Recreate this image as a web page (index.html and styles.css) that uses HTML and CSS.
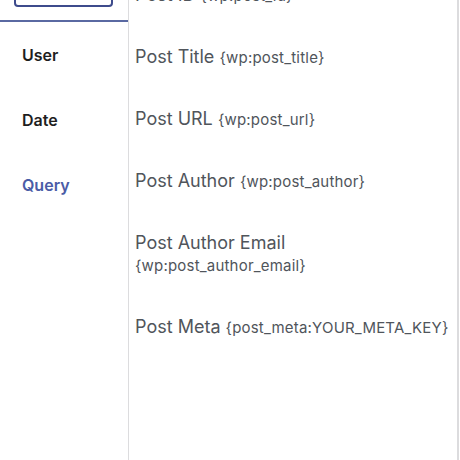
FILE: index.html
```html
<!DOCTYPE html>
<html lang="en">
  <head>
    <meta charset="UTF-8" />
    <meta name="viewport" content="width=device-width, initial-scale=1.0" />
    <title>Merge Tags</title>
    <link rel="stylesheet" href="styles.css">
  </head>
  <body>
    <div class="tags-panel">
      <div class="tags-nav">
        <div class="nav-head">
          <button class="nav-btn" type="button"></button>
        </div>
        <div class="nav-item">User</div>
        <div class="nav-item">Date</div>
        <div class="nav-item active">Query</div>
      </div>

      <ul class="tag-list">
        <li class="tag">Post ID <code>{wp:post_id}</code></li>
        <li class="tag">Post Title <code>{wp:post_title}</code></li>
        <li class="tag">Post URL <code>{wp:post_url}</code></li>
        <li class="tag">Post Author <code>{wp:post_author}</code></li>
        <li class="tag">Post Author Email <code>{wp:post_author_email}</code></li>
        <li class="tag">Post Meta <code>{post_meta:YOUR_META_KEY}</code></li>
      </ul>
    </div>
  </body>
</html>
```

FILE: styles.css
```css
* {
  margin: 0;
  padding: 0;
  box-sizing: border-box;
  font-family: Inter, "Liberation Sans", sans-serif;
}

body {
  height: 460px;
  overflow: hidden;
  background: white;
}

.tags-panel {
  display: flex;
  width: 459px;
  height: 495px;
  margin-top: -35px;
}

.tags-nav {
  width: 128px;
  flex-shrink: 0;
}

.nav-head {
  padding: 0 15px 13px 14px;
  border-bottom: 2px solid #5a69a2;
}

.nav-btn {
  display: block;
  width: 99px;
  height: 42px;
  background: white;
  border: 2px solid #3e4b8c;
  border-radius: 4px;
}

.nav-item {
  height: 65px;
  display: flex;
  align-items: center;
  padding-left: 22px;
  font-size: 16px;
  font-weight: 600;
  color: #1e1e1e;
}

.nav-item.active {
  color: #4a5ca6;
}

.tag-list {
  list-style: none;
  flex: 1;
  border-left: 1px solid #dcdcde;
  border-right: 2px solid #dcdcde;
}

.tag {
  padding: 19px 6px 20px;
  line-height: 22px;
  font-size: 18px;
  color: #50555b;
}

.tag code {
  font-size: 15px;
  letter-spacing: 0.2px;
  color: #50555b;
}
```
